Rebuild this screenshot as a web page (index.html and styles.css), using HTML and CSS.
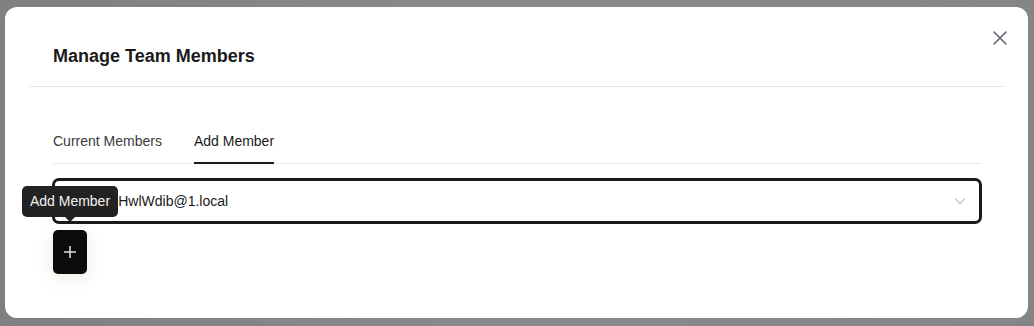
FILE: index.html
```html
<!DOCTYPE html>
<html>
<head>
<meta charset="utf-8">
<link rel="stylesheet" href="styles.css">
</head>
<body>
<div class="overlay">
  <div class="modal">
    <button class="close" aria-label="Close">
      <svg width="16" height="16" viewBox="0 0 16 16"><path d="M2 2 L14 14 M14 2 L2 14" stroke="#5f6673" stroke-width="1.6" stroke-linecap="round" fill="none"/></svg>
    </button>
    <div class="header">
      <h2 class="title">Manage Team Members</h2>
    </div>
    <div class="divider"></div>
    <div class="content">
      <div class="tabs">
        <div class="tab">Current Members</div>
        <div class="tab active">Add Member</div>
      </div>
      <div class="select">
        <span class="value">uxqpgCHwlWdib@1.local</span>
        <svg class="chev" width="12" height="8" viewBox="0 0 12 8"><path d="M1 1.5 L6 6.5 L11 1.5" stroke="#c8c8c8" stroke-width="1.3" fill="none"/></svg>
      </div>
      <div class="actions">
        <div class="btn-wrap">
          <button class="add">
            <svg width="14" height="14" viewBox="0 0 14 14"><path d="M7 1 V13 M1 7 H13" stroke="#e0e0e0" stroke-width="1.5" fill="none"/></svg>
          </button>
          <div class="tooltip">Add Member</div>
        </div>
      </div>
    </div>
  </div>
</div>
</body>
</html>
```

FILE: styles.css
```css
* { box-sizing: border-box; }
html, body { margin: 0; padding: 0; }
body {
  width: 1034px;
  height: 326px;
  overflow: hidden;
  font-family: "Liberation Sans", Arial, sans-serif;
  background: #878787;
}
.overlay {
  width: 1034px;
  height: 326px;
  padding: 7px 6px 0 5px;
  background: linear-gradient(90deg, #808080 0%, #8a8a8a 50%, #858585 100%);
}
.modal {
  position: relative;
  width: 1023px;
  height: 311px;
  background: #fff;
  border-radius: 12px;
}
.close {
  position: absolute;
  top: 21px;
  right: 18px;
  width: 20px;
  height: 20px;
  padding: 0;
  border: 0;
  background: none;
  display: flex;
  align-items: center;
  justify-content: center;
}
.header {
  padding: 35px 48px 16px;
}
.title {
  margin: 0;
  font-size: 18px;
  line-height: 28px;
  font-weight: 700;
  color: #1a1a1a;
}
.divider {
  height: 1px;
  margin: 0 23px 0 24px;
  background: #e8e8e8;
}
.content {
  padding: 34px 47px 0 48px;
}
.tabs {
  display: flex;
  gap: 32px;
  border-bottom: 1px solid #ebebeb;
}
.tab {
  font-size: 14px;
  line-height: 20px;
  color: #3a3a3a;
  padding: 10px 0 11px;
  border-bottom: 2px solid transparent;
  margin-bottom: -1px;
}
.tab.active {
  color: #1a1a1a;
  border-bottom-color: #1a1a1a;
}
.select {
  margin-top: 14px;
  height: 46px;
  border: 3px solid #1a1a1a;
  border-radius: 7px;
  display: flex;
  align-items: center;
  justify-content: space-between;
  padding: 0 13px 0 15px;
  margin-left: -1px;
  margin-right: -1px;
}
.value {
  font-size: 14px;
  color: #1a1a1a;
}
.actions {
  display: flex;
  margin-top: 6px;
}
.btn-wrap {
  position: relative;
}
.add {
  width: 34px;
  height: 44px;
  border: 0;
  border-radius: 5px;
  background: #0b0b0b;
  display: flex;
  align-items: center;
  justify-content: center;
  padding: 0;
  box-shadow: 0 4px 18px rgba(110, 130, 60, 0.14);
}
.tooltip {
  position: absolute;
  left: 50%;
  bottom: 100%;
  margin-bottom: 13px;
  transform: translateX(-50%);
  width: 96px;
  height: 31px;
  background: #222222;
  color: #f2f2f2;
  font-size: 14px;
  line-height: 31px;
  text-align: center;
  border-radius: 5px;
  white-space: nowrap;
}
.tooltip::after {
  content: "";
  position: absolute;
  left: 50%;
  top: 100%;
  margin-left: -5px;
  border: 5px solid transparent;
  border-top-color: #222222;
}
```
